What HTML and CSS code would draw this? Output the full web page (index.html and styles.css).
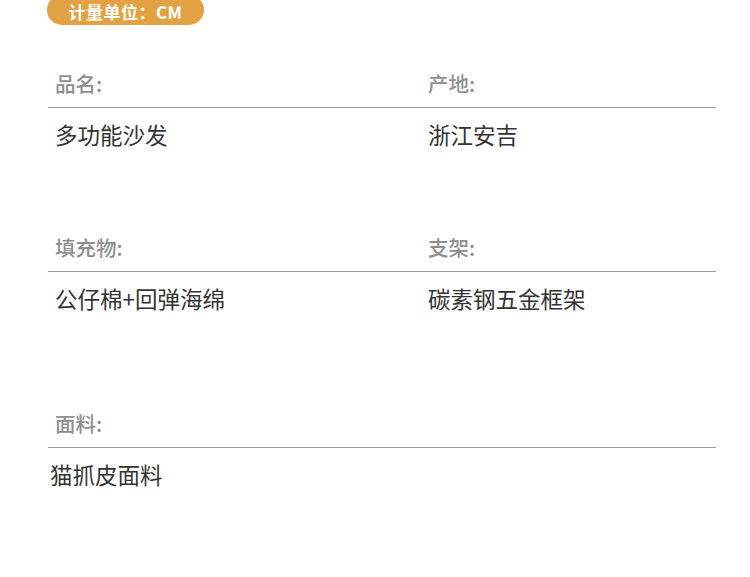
FILE: index.html
```html
<!DOCTYPE html>
<html lang="zh-CN">
<head>
<meta charset="utf-8">
<title>产品参数</title>
<link rel="stylesheet" href="styles.css">
</head>
<body>
<div class="page">
  <div class="badge">计量单位：CM</div>

  <section class="row row-first">
    <div class="labels">
      <div class="label">品名:</div>
      <div class="label">产地:</div>
    </div>
    <div class="values">
      <div class="value">多功能沙发</div>
      <div class="value">浙江安吉</div>
    </div>
  </section>

  <section class="row row-second">
    <div class="labels">
      <div class="label">填充物:</div>
      <div class="label">支架:</div>
    </div>
    <div class="values">
      <div class="value">公仔棉+回弹海绵</div>
      <div class="value">碳素钢五金框架</div>
    </div>
  </section>

  <section class="row row-third">
    <div class="labels">
      <div class="label">面料:</div>
    </div>
    <div class="values values-tight">
      <div class="value">猫抓皮面料</div>
    </div>
  </section>
</div>
</body>
</html>
```

FILE: styles.css
```css
html, body {
  margin: 0;
  padding: 0;
  background: #ffffff;
}

body {
  font-family: "Noto Sans CJK SC", "Noto Sans", sans-serif;
}

.page {
  width: 750px;
  height: 577px;
  box-sizing: border-box;
  padding: 0 34px 0 48px;
  overflow: hidden;
}

.badge {
  display: inline-flex;
  align-items: center;
  justify-content: center;
  box-sizing: border-box;
  width: 157px;
  height: 30px;
  margin-top: -6px;
  margin-left: -1px;
  padding-top: 4px;
  border-radius: 15px;
  background: #e2a244;
  color: #ffffff;
  font-size: 17px;
  font-weight: 700;
  letter-spacing: 0.5px;
  line-height: 1;
}

.row-first {
  margin-top: 43px;
}

.row-second {
  margin-top: 83px;
}

.row-third {
  margin-top: 95px;
}

.labels,
.values {
  display: grid;
  grid-template-columns: 373px 1fr;
  padding-left: 7px;
}

.labels {
  padding-bottom: 9px;
  border-bottom: 1px solid #9a9a9a;
}

.values {
  padding-top: 11px;
}

.values-tight {
  padding-left: 2px;
}

.label {
  font-size: 20.5px;
  line-height: 30px;
  font-weight: 500;
  color: #8e8e8e;
}

.value {
  font-size: 22.5px;
  line-height: 30px;
  color: #333333;
}
```
